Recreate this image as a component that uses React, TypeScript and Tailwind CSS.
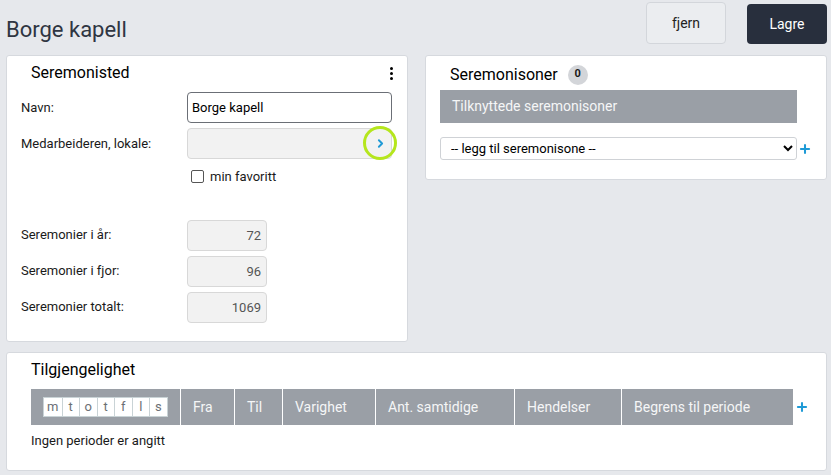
import { ChevronRight, Plus } from "lucide-react";

const stats = [
  { label: "Seremonier i år:", value: "72" },
  { label: "Seremonier i fjor:", value: "96" },
  { label: "Seremonier totalt:", value: "1069" },
];

const days = ["m", "t", "o", "t", "f", "l", "s"];

const cols = [
  { name: "Fra", w: "w-[54px]" },
  { name: "Til", w: "w-[48px]" },
  { name: "Varighet", w: "w-[93px]" },
  { name: "Ant. samtidige", w: "w-[139px]" },
  { name: "Hendelser", w: "w-[107px]" },
  { name: "Begrens til periode", w: "flex-1" },
];

export default function App() {
  return (
    <div
      className="w-[831px] h-[475px] bg-[#e6e8ec] text-[13px] text-[#1a1a1a] overflow-hidden"
      style={{ fontFamily: "Roboto, 'Liberation Sans', sans-serif" }}
    >
      {/* Header */}
      <div className="flex items-start h-[55px]">
        <h1 className="pl-[6px] pt-[16px] text-[22px] text-[#2f3542] leading-[28px]">
          Borge kapell
        </h1>
        <div className="ml-auto flex gap-[21px] pr-[4px] pt-[2px]">
          <button className="w-[80px] h-[42px] rounded border border-[#d3d6db] bg-[#ebedf0] text-[#222] text-[14px]">
            fjern
          </button>
          <button className="w-[80px] h-[40px] mt-[2px] rounded bg-[#282f3d] text-white text-[14px]">
            Lagre
          </button>
        </div>
      </div>

      <div className="flex gap-[17px] pl-[6px] pr-[4px] items-start">
        {/* Seremonisted */}
        <div className="w-[402px] shrink-0 h-[287px] bg-white border border-[#d6d9de] rounded-[3px]">
          <div className="flex items-center pl-[24px] pr-[14px] pt-[4px] h-[30px]">
            <span className="text-[16px] text-black">Seremonisted</span>
            <span className="ml-auto flex flex-col gap-[2px] items-center">
              <span className="w-[3px] h-[3px] rounded-full bg-black" />
              <span className="w-[3px] h-[3px] rounded-full bg-black" />
              <span className="w-[3px] h-[3px] rounded-full bg-black" />
            </span>
          </div>
          <div className="pl-[14px] pr-[15px] pt-[6px]">
            <div className="flex items-center h-[31px]">
              <span className="w-[166px]">Navn:</span>
              <input
                defaultValue="Borge kapell"
                className="flex-1 h-[31px] border border-[#6b6f76] rounded-[4px] px-[4px] text-[13px] text-black bg-white"
              />
            </div>
            <div className="flex items-center h-[31px] mt-[5px]">
              <span className="w-[166px]">Medarbeideren, lokale:</span>
              <div className="relative flex-1 h-[31px] border border-[#d8d8d8] rounded-[4px] bg-[#f2f2f2]">
                <div className="absolute right-[-6px] top-[-3px] w-[34px] h-[34px] rounded-full border-[3px] border-[#b5e61d] flex items-center justify-center">
                  <ChevronRight className="w-[13px] h-[13px] text-[#1f9ad6]" strokeWidth={3.5} />
                </div>
              </div>
            </div>
            <label className="flex items-center gap-[6px] ml-[170px] mt-[8px]">
              <span className="w-[13px] h-[13px] border border-[#555] rounded-[2px] bg-white" />
              <span>min favoritt</span>
            </label>
            <div className="mt-[33px] flex flex-col gap-[5px]">
              {stats.map((s) => (
                <div key={s.label} className="flex items-center h-[31px]">
                  <span className="w-[166px]">{s.label}</span>
                  <div className="w-[80px] h-[31px] border border-[#d8d8d8] rounded-[4px] bg-[#f2f2f2] text-right pr-[5px] leading-[29px] text-[#555]">
                    {s.value}
                  </div>
                </div>
              ))}
            </div>
          </div>
        </div>

        {/* Seremonisoner */}
        <div className="w-[402px] shrink-0 h-[125px] bg-white border border-[#d6d9de] rounded-[3px] pl-[14px]">
          <div className="flex items-center gap-[10px] pl-[10px] pt-[3px] h-[34px]">
            <span className="text-[16px] text-black">Seremonisoner</span>
            <span className="w-[20px] h-[20px] rounded-full bg-[#d3d5d9] text-[11px] font-bold flex items-center justify-center">
              0
            </span>
          </div>
          <div className="w-[357px] h-[33px] bg-[#9a9fa6] text-[#f5f6f7] text-[14px] pl-[12px] flex items-center">
            Tilknyttede seremonisoner
          </div>
          <div className="flex items-center mt-[14px]">
            <select className="w-[357px] h-[23px] border border-[#cfd2d6] rounded-[3px] text-[13px] text-black pl-[6px] bg-white">
              <option>-- legg til seremonisone --</option>
            </select>
            <Plus className="w-[14px] h-[14px] text-[#1e9ad6] ml-[1px]" strokeWidth={3.5} />
          </div>
        </div>
      </div>

      {/* Tilgjengelighet */}
      <div className="ml-[6px] mr-[4px] mt-[10px] h-[119px] bg-white border border-[#d6d9de] rounded-[3px] pl-[24px]">
        <div className="pt-[5px] h-[36px] text-[16px] text-black">Tilgjengelighet</div>
        <div className="flex items-center">
          <div className="flex w-[762px] h-[36px] bg-[#9a9fa6] text-[#f5f6f7] text-[14px]">
            <div className="w-[150px] border-r border-white flex items-center pl-[12px]">
              <div className="flex bg-white border border-[#c9d3d6]">
                {days.map((d, i) => (
                  <span
                    key={i}
                    className="w-[17.5px] h-[18px] flex items-center justify-center text-[13px] text-[#6b7075] border-l border-[#c9d3d6] first:border-l-0"
                  >
                    {d}
                  </span>
                ))}
              </div>
            </div>
            {cols.map((c) => (
              <div
                key={c.name}
                className={`${c.w} border-r border-white last:border-r-0 flex items-center pl-[12px]`}
              >
                {c.name}
              </div>
            ))}
          </div>
          <Plus className="w-[14px] h-[14px] text-[#1e9ad6] ml-[2px]" strokeWidth={3.5} />
        </div>
        <div className="mt-[6px]">Ingen perioder er angitt</div>
      </div>
    </div>
  );
}
